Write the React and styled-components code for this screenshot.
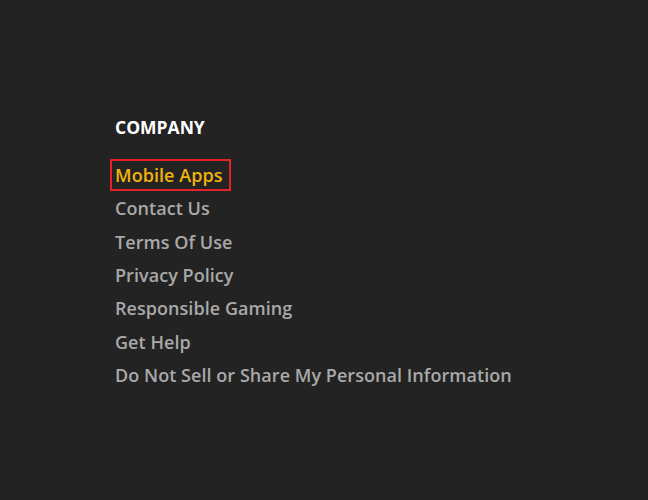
import React from 'react';
import styled, { createGlobalStyle } from 'styled-components';

const GlobalStyle = createGlobalStyle`
	html, body {
		margin: 0;
		padding: 0;
		background: #232323;
	}
	body {
		font-family: 'Open Sans', 'Liberation Sans', sans-serif;
	}
`;

const Page = styled.div`
	width: 648px;
	height: 500px;
	background: #232323;
	padding: 114px 0 0 115px;
	box-sizing: border-box;
`;

const Heading = styled.h3`
	margin: 0 0 19px;
	color: #ffffff;
	font-size: 17.5px;
	font-weight: 700;
	line-height: 26px;
`;

const LinkList = styled.ul`
	list-style: none;
	margin: 0;
	padding: 0;
	display: flex;
	flex-direction: column;
	align-items: flex-start;
`;

const Item = styled.li`
	height: 33.3px;
	display: flex;
	align-items: center;
`;

const Link = styled.a`
	color: ${(p) => (p.active ? '#f2b20d' : '#a9a9a9')};
	font-size: 18px;
	font-weight: 600;
	line-height: 24px;
	text-decoration: none;
	letter-spacing: 0.05px;
	padding: 2px 6px 2px 3px;
	margin: -1px 0 0 -5px;
	border: 2px solid ${(p) => (p.active ? '#e5222a' : 'transparent')};
`;

const links = [
	'Mobile Apps',
	'Contact Us',
	'Terms Of Use',
	'Privacy Policy',
	'Responsible Gaming',
	'Get Help',
	'Do Not Sell or Share My Personal Information',
];

export default function App() {
	return (
		<Page>
			<GlobalStyle />
			<Heading>COMPANY</Heading>
			<LinkList>
				{links.map((label, i) => (
					<Item key={label}>
						<Link href="#" active={i === 0}>
							{label}
						</Link>
					</Item>
				))}
			</LinkList>
		</Page>
	);
}
